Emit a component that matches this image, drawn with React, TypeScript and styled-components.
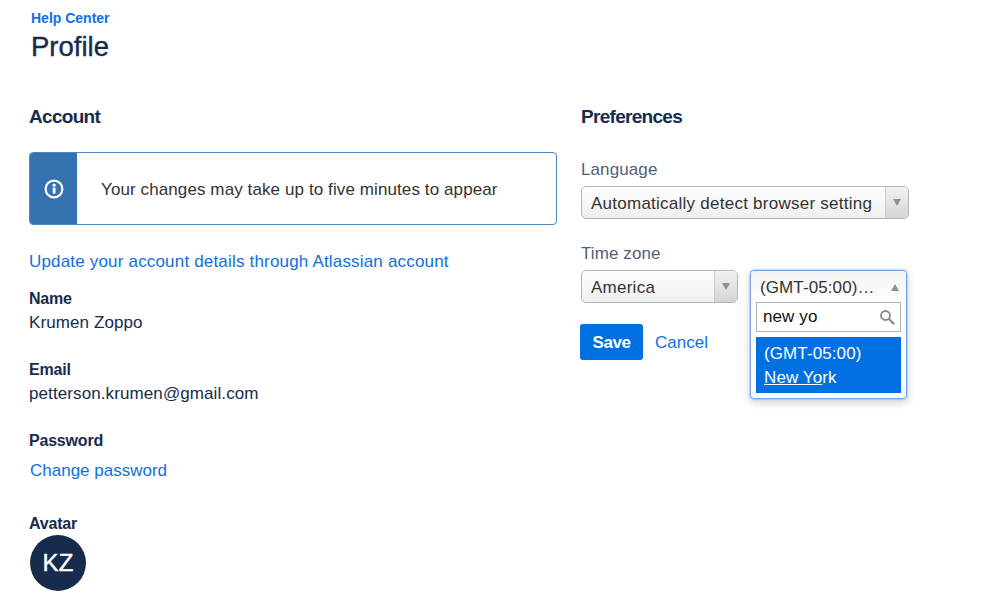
import styled, { createGlobalStyle } from "styled-components";

const GlobalStyle = createGlobalStyle`
    html, body {
        margin: 0;
        padding: 0;
        background: #fff;
        font-family: "Liberation Sans", Arial, sans-serif;
        font-size: 17px;
        letter-spacing: 0.1px;
        color: #172b4d;
    }
`

const Page = styled.div`
    width: 999px;
    height: 608px;
    overflow: hidden;
    padding: 10px 0 0 29px;
    box-sizing: border-box;
`

const Crumb = styled.a`
    display: block;
    margin-left: 2px;
    font-size: 14px;
    line-height: 17px;
    font-weight: 700;
    letter-spacing: 0;
    color: #0f6fe8;
`

const Title = styled.h1`
    margin: 3px 0 0 2px;
    font-size: 27.5px;
    line-height: 34px;
    font-weight: 400;
    letter-spacing: 0;
    color: #172b4d;
    -webkit-text-stroke: 0.4px #172b4d;
`

const Columns = styled.div`
    display: flex;
    gap: 24px;
    margin-top: 41px;
`

const Column = styled.section<{ $width: number }>`
    width: ${p => p.$width}px;
    flex: none;
`

const SectionTitle = styled.h2`
    margin: 0;
    font-size: 19px;
    line-height: 24px;
    font-weight: 700;
    letter-spacing: -0.7px;
    color: #172b4d;
`

const Notice = styled.div`
    display: flex;
    height: 73px;
    margin-top: 23px;
    box-sizing: border-box;
    border: 1px solid #4f86c0;
    border-radius: 4px;
    overflow: hidden;
`

const NoticeIcon = styled.div`
    width: 47px;
    flex: none;
    display: flex;
    align-items: center;
    justify-content: center;
    background: #3572b0;
`

const NoticeText = styled.div`
    display: flex;
    align-items: center;
    padding: 2px 0 0 24px;
    color: #333;
`

const TextLink = styled.a`
    color: #0f6fe0;
`

const AccountLink = styled(TextLink)`
    display: block;
    margin-top: 27px;
    line-height: 20px;
    letter-spacing: 0.18px;
`

const Field = styled.div<{ $gap: number }>`
    margin-top: ${p => p.$gap}px;
    line-height: 24px;
    color: #172b4d;
`

const FieldLabel = styled.div`
    font-weight: 700;
    font-size: 16px;
    letter-spacing: -0.2px;
`

const PasswordLink = styled(TextLink)`
    display: block;
    margin: 6px 0 0 1px;
    letter-spacing: 0;
`

const Avatar = styled.div`
    width: 56px;
    height: 56px;
    margin: -1px 0 0 1px;
    border-radius: 50%;
    background: #172b4d;
    color: #fff;
    display: flex;
    align-items: center;
    justify-content: center;
    font-size: 24px;
    -webkit-text-stroke: 0.4px #fff;
`

const PrefLabel = styled.div<{ $gap: number }>`
    margin-top: ${p => p.$gap}px;
    line-height: 20px;
    color: #505f79;
`

const SelectBox = styled.div<{ $width: number }>`
    width: ${p => p.$width}px;
    height: 33px;
    margin-top: 6px;
    box-sizing: border-box;
    display: flex;
    align-items: stretch;
    border: 1px solid #b5b5b5;
    border-radius: 5px;
    background: linear-gradient(#fefefe, #efefef);
    color: #333;
    letter-spacing: 0.25px;
`

const SelectValue = styled.div`
    flex: 1;
    display: flex;
    align-items: center;
    padding: 2px 0 0 9px;
    white-space: nowrap;
`

const SelectArrow = styled.div`
    width: 22px;
    flex: none;
    display: flex;
    align-items: center;
    justify-content: center;
    border-left: 1px solid #c9c9c9;
    background: linear-gradient(#f2f2f2, #d4d4d4);
    border-radius: 0 4px 4px 0;
`

const Caret = styled.span<{ $up?: boolean }>`
    width: 0;
    height: 0;
    border-left: 4px solid transparent;
    border-right: 4px solid transparent;
    ${p => p.$up ? "border-bottom: 7px solid #8f8f8f;" : "border-top: 7px solid #8f8f8f;"}
`

const ZoneRow = styled.div`
    display: flex;
    gap: 12px;
`

const ZoneSlot = styled.div`
    position: relative;
    width: 157px;
    height: 33px;
    margin-top: 6px;
`

const Dropdown = styled.div`
    position: absolute;
    top: 0;
    left: 0;
    width: 157px;
    height: 129px;
    box-sizing: border-box;
    border: 1px solid #6fa5ee;
    border-radius: 4px;
    background: #fff;
    box-shadow: 0 0 0 1px rgba(111, 165, 238, 0.3), 0 3px 8px rgba(0, 0, 0, 0.22);
    padding: 0 5px;
`

const DropdownHead = styled.div`
    display: flex;
    align-items: center;
    justify-content: space-between;
    height: 31px;
    margin: 0 -5px;
    padding: 2px 7px 0 9px;
    box-sizing: border-box;
    color: #333;
    background: linear-gradient(#f3f3f3, #fff);
    border-radius: 3px 3px 0 0;
`

const SearchBox = styled.div`
    display: flex;
    align-items: center;
    justify-content: space-between;
    height: 30px;
    box-sizing: border-box;
    border: 1px solid #b5b5b5;
    padding: 0 5px 0 6px;
    color: #111;
`

const Option = styled.div`
    margin-top: 5px;
    height: 56px;
    box-sizing: border-box;
    padding: 5px 8px;
    background: #0070e0;
    color: #fff;
    line-height: 24px;
`

const Match = styled.span`
    text-decoration: underline;
`

const Actions = styled.div`
    display: flex;
    align-items: center;
    gap: 12px;
    margin-top: 21px;
    margin-left: -1px;
`

const SaveButton = styled.button`
    width: 63px;
    height: 36px;
    padding-top: 2px;
    border: none;
    border-radius: 3px;
    background: #0070e0;
    color: #fff;
    font: 700 17px "Liberation Sans", Arial, sans-serif;
    letter-spacing: -0.4px;
`

const CancelLink = styled(TextLink)`
    padding-top: 2px;
    letter-spacing: 0;
`

export default function App() {
    return (
        <Page>
            <GlobalStyle />
            <Crumb>Help Center</Crumb>
            <Title>Profile</Title>
            <Columns>
                <Column $width={528}>
                    <SectionTitle>Account</SectionTitle>
                    <Notice>
                        <NoticeIcon>
                            <svg width="20" height="20" viewBox="0 0 20 20">
                                <circle cx="10" cy="10" r="8.4" fill="none" stroke="#fff" strokeWidth="2.2" />
                                <rect x="8.7" y="8.6" width="2.8" height="6" fill="#fff" />
                                <circle cx="10.1" cy="6.2" r="1.6" fill="#fff" />
                            </svg>
                        </NoticeIcon>
                        <NoticeText>Your changes may take up to five minutes to appear</NoticeText>
                    </Notice>
                    <AccountLink>Update your account details through Atlassian account</AccountLink>
                    <Field $gap={15}>
                        <FieldLabel>Name</FieldLabel>
                        Krumen Zoppo
                    </Field>
                    <Field $gap={23}>
                        <FieldLabel>Email</FieldLabel>
                        petterson.krumen@gmail.com
                    </Field>
                    <Field $gap={23}>
                        <FieldLabel>Password</FieldLabel>
                        <PasswordLink>Change password</PasswordLink>
                    </Field>
                    <Field $gap={29}>
                        <FieldLabel>Avatar</FieldLabel>
                        <Avatar>KZ</Avatar>
                    </Field>
                </Column>
                <Column $width={340}>
                    <SectionTitle>Preferences</SectionTitle>
                    <PrefLabel $gap={31}>Language</PrefLabel>
                    <SelectBox $width={328}>
                        <SelectValue>Automatically detect browser setting</SelectValue>
                        <SelectArrow><Caret /></SelectArrow>
                    </SelectBox>
                    <PrefLabel $gap={25}>Time zone</PrefLabel>
                    <ZoneRow>
                        <SelectBox $width={157}>
                            <SelectValue>America</SelectValue>
                            <SelectArrow><Caret /></SelectArrow>
                        </SelectBox>
                        <ZoneSlot>
                            <Dropdown>
                                <DropdownHead>
                                    (GMT-05:00)…
                                    <Caret $up />
                                </DropdownHead>
                                <SearchBox>
                                    new yo
                                    <svg width="16" height="16" viewBox="0 0 16 16" fill="none" stroke="#8a8a8a">
                                        <circle cx="6.5" cy="6.5" r="4.5" strokeWidth="1.8" />
                                        <path d="M10 10l4.5 4.5" strokeWidth="2.4" strokeLinecap="round" />
                                    </svg>
                                </SearchBox>
                                <Option>
                                    (GMT-05:00)<br />
                                    <Match>New Yo</Match>rk
                                </Option>
                            </Dropdown>
                        </ZoneSlot>
                    </ZoneRow>
                    <Actions>
                        <SaveButton>Save</SaveButton>
                        <CancelLink>Cancel</CancelLink>
                    </Actions>
                </Column>
            </Columns>
        </Page>
    )
}
